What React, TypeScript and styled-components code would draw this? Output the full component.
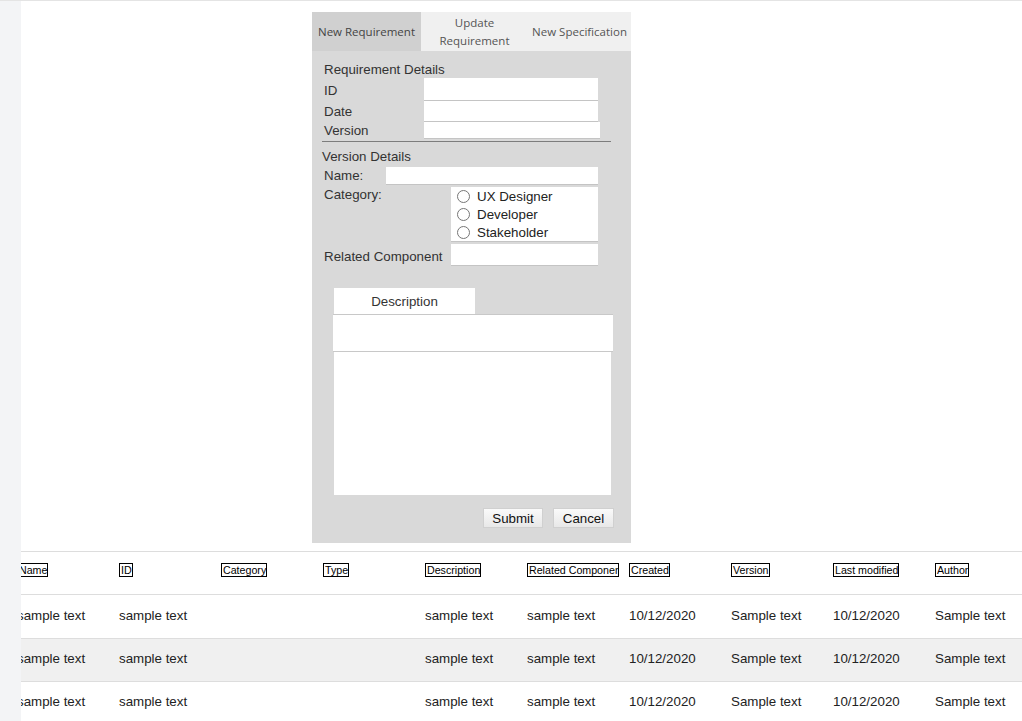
import React from 'react';
import styled, { createGlobalStyle } from 'styled-components';

const GlobalStyle = createGlobalStyle`
    html, body {
        margin: 0;
        padding: 0;
        background: #ffffff;
    }
    body {
        border-top: 1px solid #e4e4e4;
        font-family: "Liberation Sans", Arial, sans-serif;
        overflow: hidden;
    }
`;

const Page = styled.div`
    display: flex;
    min-height: 720px;
`;

const Sidebar = styled.div`
    width: 21px;
    flex-shrink: 0;
    background-color: #f3f4f6;
    position: relative;
    z-index: 2;
`;

const Main = styled.div`
    flex: 1;
    min-width: 0;
    overflow: hidden;
    padding-top: 11px;
`;

const Panel = styled.div`
    width: 319px;
    margin-left: 291px;
    background-color: #d9d9d9;
`;

const Tabs = styled.div`
    display: grid;
    grid-template-columns: 109px 107px 103px;
    height: 39px;
`;

const Tab = styled.div<{ $active?: boolean }>`
    display: flex;
    align-items: center;
    justify-content: center;
    text-align: center;
    background-color: ${p => (p.$active ? '#d0d0d0' : '#f0f0f0')};
    color: ${p => (p.$active ? '#444' : '#555')};
    font-family: "Open Sans", "Noto Sans", sans-serif;
    font-size: 11.5px;
    line-height: 18px;
`;

const Body = styled.div`
    display: flex;
    flex-direction: column;
    padding: 10px 18px 15px 10px;
    color: #333;
    font-size: 13.33px;
`;

const SectionTitle = styled.div<{ $indent: number }>`
    padding-left: ${p => p.$indent}px;
    line-height: 17px;
`;

const Row = styled.div<{ $input: number; $gap?: number }>`
    display: grid;
    grid-template-columns: ${p => p.$input}px 1fr;
    align-items: center;
    padding-left: 2px;
    margin-top: ${p => p.$gap ?? 0}px;
`;

const Label = styled.span<{ $top?: boolean; $drop?: number }>`
    align-self: ${p => (p.$top ? 'start' : 'center')};
    line-height: 16px;
    white-space: nowrap;
    padding-top: ${p => p.$drop ?? 0}px;
`;

const TextInput = styled.div<{ $h: number; $w: number }>`
    height: ${p => p.$h}px;
    width: ${p => p.$w}px;
    box-sizing: border-box;
    background: #ffffff;
    border-bottom: 1px solid #c4c4c4;
`;

const Divider = styled.hr`
    margin: 2px 0 6px 0;
    border: none;
    border-top: 1px solid #7d7d7d;
    width: 289px;
`;

const RadioBox = styled.div`
    width: 147px;
    height: 55px;
    box-sizing: border-box;
    background: #ffffff;
    border-bottom: 1px solid #c4c4c4;
    padding: 1px 0 0 5px;
    display: flex;
    flex-direction: column;
`;

const RadioOption = styled.label`
    display: flex;
    align-items: center;
    height: 18px;
    color: #222;

    input {
        margin: 0 7px 0 1px;
        width: 13px;
        height: 13px;
    }
`;

const DescTab = styled.div`
    margin: 22px 0 0 12px;
    width: 141px;
    height: 26px;
    background: #ffffff;
    display: flex;
    align-items: center;
    justify-content: center;
    color: #333;
`;

const DescInput = styled.div`
    margin-left: 11px;
    width: 280px;
    height: 38px;
    box-sizing: border-box;
    background: #ffffff;
    border-top: 1px solid #c8c8c8;
    border-bottom: 1px solid #c8c8c8;
`;

const DescArea = styled.div`
    margin-left: 12px;
    width: 277px;
    height: 143px;
    background: #ffffff;
`;

const Actions = styled.div`
    display: flex;
    justify-content: flex-end;
    gap: 10px;
    margin-top: 13px;
    margin-right: -1px;
`;

const Button = styled.button<{ $w: number }>`
    width: ${p => p.$w}px;
    height: 20px;
    padding: 0;
    border: 1px solid #d0d0d0;
    background: linear-gradient(#fafafa, #e8e8e8);
    font-family: "Liberation Sans", Arial, sans-serif;
    font-size: 13.33px;
    color: #111;
`;

const Table = styled.div`
    margin-top: 8px;
    border-top: 1px solid #dddddd;
    overflow: hidden;
`;

const TableRow = styled.div<{ $shade?: boolean; $head?: boolean; $h: number }>`
    display: grid;
    grid-template-columns: repeat(10, 102px);
    margin-left: -4px;
    width: 1200px;
    box-sizing: border-box;
    height: ${p => p.$h}px;
    align-items: ${p => (p.$head ? 'start' : 'center')};
    padding: ${p => (p.$head ? '11px 0 0 0' : '0 0 3px 0')};
    background: ${p => (p.$shade ? '#f0f0f0' : '#ffffff')};
    border-bottom: 1px solid #dddddd;
`;

const HeadCell = styled.div`
    display: flex;
`;

const HeadLabel = styled.span`
    border: 1px solid #000;
    font-size: 10.67px;
    line-height: 12px;
    padding: 0 0 0 1px;
    color: #000;
    max-width: 89px;
    overflow: hidden;
    white-space: nowrap;
`;

const Cell = styled.div`
    font-size: 13.33px;
    color: #222;
    white-space: nowrap;
`;

const headers = ['Name', 'ID', 'Category', 'Type', 'Description', 'Related Component', 'Created', 'Version', 'Last modified', 'Author'];
const rowData = ['sample text', 'sample text', '', '', 'sample text', 'sample text', '10/12/2020', 'Sample text', '10/12/2020', 'Sample text'];
const rowHeights = [44, 43, 43];

const App = () => {
    return (
        <>
            <GlobalStyle />
            <Page>
                <Sidebar />
                <Main>
                    <Panel>
                        <Tabs>
                            <Tab $active>New Requirement</Tab>
                            <Tab>Update<br />Requirement</Tab>
                            <Tab>New Specification</Tab>
                        </Tabs>
                        <Body>
                            <SectionTitle $indent={2}>Requirement Details</SectionTitle>
                            <Row $input={100}>
                                <Label $drop={3}>ID</Label>
                                <TextInput $h={23} $w={174} />
                            </Row>
                            <Row $input={100}>
                                <Label>Date</Label>
                                <TextInput $h={21} $w={174} />
                            </Row>
                            <Row $input={100}>
                                <Label>Version</Label>
                                <TextInput $h={17} $w={176} />
                            </Row>
                            <Divider />
                            <SectionTitle $indent={0}>Version Details</SectionTitle>
                            <Row $input={62} $gap={2}>
                                <Label>Name:</Label>
                                <TextInput $h={18} $w={212} />
                            </Row>
                            <Row $input={127} $gap={2}>
                                <Label $top>Category:</Label>
                                <RadioBox>
                                    <RadioOption><input type="radio" name="cat" />UX Designer</RadioOption>
                                    <RadioOption><input type="radio" name="cat" />Developer</RadioOption>
                                    <RadioOption><input type="radio" name="cat" />Stakeholder</RadioOption>
                                </RadioBox>
                            </Row>
                            <Row $input={127} $gap={2}>
                                <Label $drop={4}>Related Component</Label>
                                <TextInput $h={22} $w={147} />
                            </Row>
                            <DescTab>Description</DescTab>
                            <DescInput />
                            <DescArea />
                            <Actions>
                                <Button $w={60}>Submit</Button>
                                <Button $w={61}>Cancel</Button>
                            </Actions>
                        </Body>
                    </Panel>
                    <Table>
                        <TableRow $head $h={43}>
                            {headers.map(h => (
                                <HeadCell key={h}><HeadLabel>{h}</HeadLabel></HeadCell>
                            ))}
                        </TableRow>
                        {rowHeights.map((h, i) => (
                            <TableRow key={i} $h={h} $shade={i === 1}>
                                {rowData.map((c, j) => (
                                    <Cell key={j}>{c}</Cell>
                                ))}
                            </TableRow>
                        ))}
                    </Table>
                </Main>
            </Page>
        </>
    );
};

export default App;
